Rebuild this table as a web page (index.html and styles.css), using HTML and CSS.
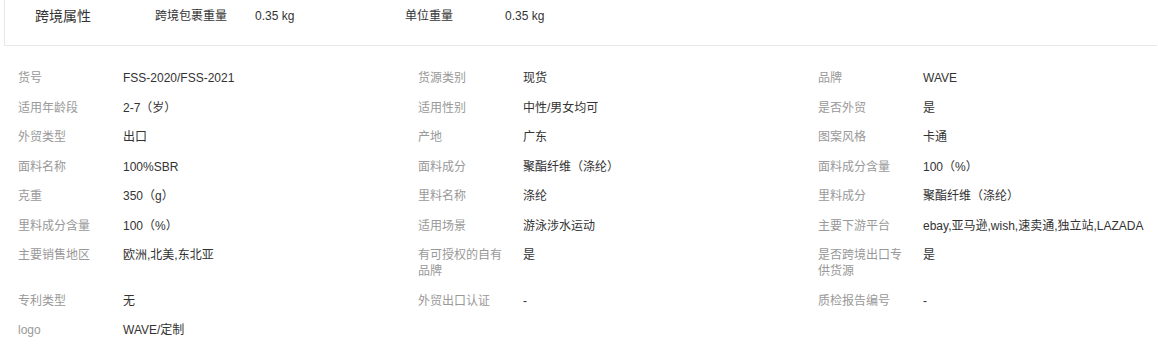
FILE: index.html
```html
<!DOCTYPE html>
<html lang="zh-CN">
<head>
<meta charset="utf-8">
<link rel="stylesheet" href="styles.css">
</head>
<body>
<div class="cross">
  <div class="cross-title">跨境属性</div>
  <div class="cross-item"><span class="cross-label">跨境包裹重量</span><span class="cross-value">0.35 kg</span></div>
  <div class="cross-item"><span class="cross-label">单位重量</span><span class="cross-value">0.35 kg</span></div>
</div>
<div class="attrs">
  <div class="attr"><div class="label">货号</div><div class="value">FSS-2020/FSS-2021</div></div>
  <div class="attr"><div class="label">货源类别</div><div class="value">现货</div></div>
  <div class="attr"><div class="label">品牌</div><div class="value">WAVE</div></div>

  <div class="attr"><div class="label">适用年龄段</div><div class="value">2-7（岁）</div></div>
  <div class="attr"><div class="label">适用性别</div><div class="value">中性/男女均可</div></div>
  <div class="attr"><div class="label">是否外贸</div><div class="value">是</div></div>

  <div class="attr"><div class="label">外贸类型</div><div class="value">出口</div></div>
  <div class="attr"><div class="label">产地</div><div class="value">广东</div></div>
  <div class="attr"><div class="label">图案风格</div><div class="value">卡通</div></div>

  <div class="attr"><div class="label">面料名称</div><div class="value">100%SBR</div></div>
  <div class="attr"><div class="label">面料成分</div><div class="value">聚酯纤维（涤纶）</div></div>
  <div class="attr"><div class="label">面料成分含量</div><div class="value">100（%）</div></div>

  <div class="attr"><div class="label">克重</div><div class="value">350（g）</div></div>
  <div class="attr"><div class="label">里料名称</div><div class="value">涤纶</div></div>
  <div class="attr"><div class="label">里料成分</div><div class="value">聚酯纤维（涤纶）</div></div>

  <div class="attr"><div class="label">里料成分含量</div><div class="value">100（%）</div></div>
  <div class="attr"><div class="label">适用场景</div><div class="value">游泳涉水运动</div></div>
  <div class="attr"><div class="label">主要下游平台</div><div class="value">ebay,亚马逊,wish,速卖通,独立站,LAZADA</div></div>

  <div class="attr"><div class="label">主要销售地区</div><div class="value">欧洲,北美,东北亚</div></div>
  <div class="attr"><div class="label">有可授权的自有品牌</div><div class="value">是</div></div>
  <div class="attr"><div class="label">是否跨境出口专供货源</div><div class="value">是</div></div>

  <div class="attr"><div class="label">专利类型</div><div class="value">无</div></div>
  <div class="attr"><div class="label">外贸出口认证</div><div class="value">-</div></div>
  <div class="attr"><div class="label">质检报告编号</div><div class="value">-</div></div>

  <div class="attr"><div class="label">logo</div><div class="value">WAVE/定制</div></div>
</div>
</body>
</html>
```
FILE: styles.css
```css
html, body {
  margin: 0;
  padding: 0;
  background: #fff;
  overflow: hidden;
}
body {
  font-family: "Liberation Sans", Arial, "Noto Sans CJK SC", sans-serif;
  font-size: 12px;
  color: #333;
}
.cross {
  margin-left: 4px;
  width: 1153px;
  height: 46px;
  border-left: 1px solid #e8e8e8;
  border-bottom: 1px solid #e8e8e8;
  box-sizing: border-box;
  display: flex;
  align-items: flex-start;
  padding-top: 7px;
  padding-left: 30px;
}
.cross-title {
  width: 120px;
  font-size: 14px;
  line-height: 18px;
  color: #333;
}
.cross-item {
  width: 250px;
  display: flex;
  line-height: 18px;
}
.cross-label {
  width: 100px;
  color: #333;
}
.cross-value {
  color: #333;
}
.attrs {
  display: grid;
  grid-template-columns: 400px 400px 1fr;
  padding-left: 18px;
  padding-top: 24px;
  row-gap: 13.5px;
}
.attr {
  display: flex;
  align-items: flex-start;
  line-height: 16px;
}
.label {
  width: 88px;
  margin-right: 17px;
  color: #999;
  flex-shrink: 0;
}
.value {
  color: #333;
  white-space: nowrap;
}
```
